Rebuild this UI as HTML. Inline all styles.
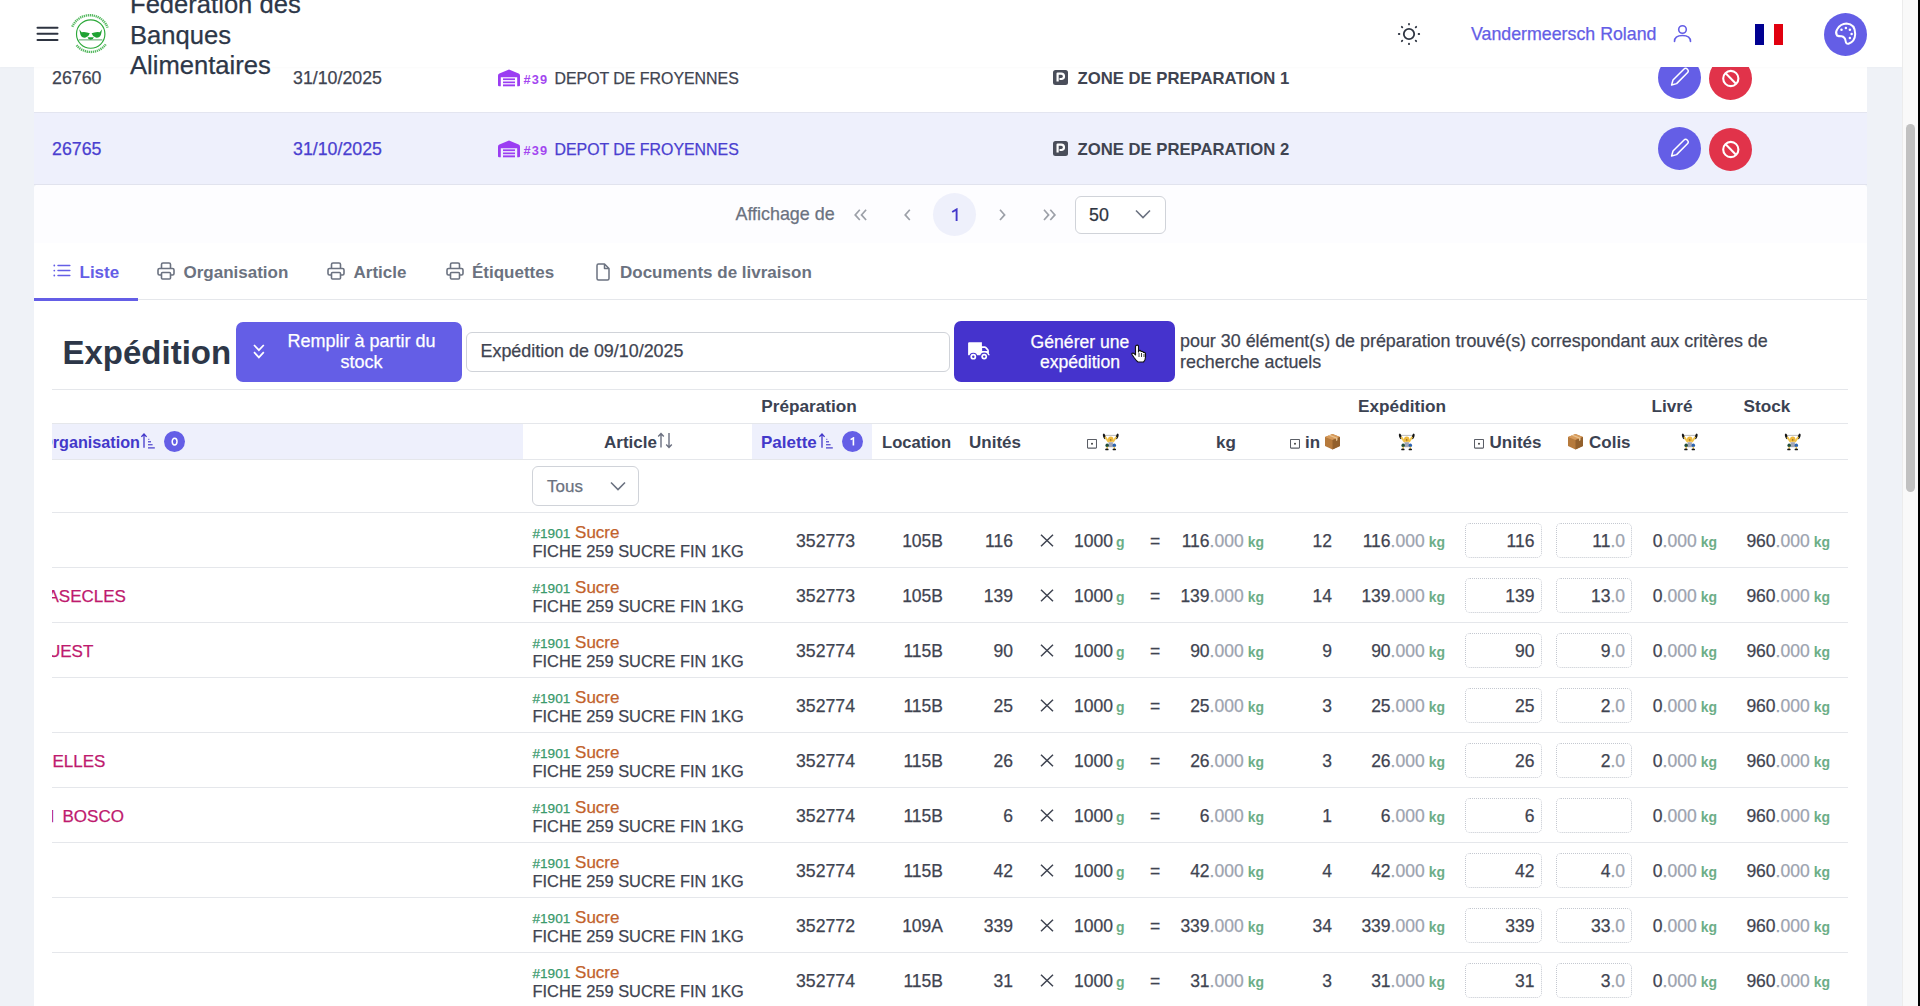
<!DOCTYPE html>
<html><head><meta charset="utf-8"><title>Expédition</title>
<style>
html,body{margin:0;padding:0;}
body{width:1920px;height:1006px;overflow:hidden;position:relative;background:#eff2f7;font-family:"Liberation Sans", sans-serif;}
.t{position:absolute;white-space:nowrap;font-family:"Liberation Sans", sans-serif;}
.r{-webkit-text-stroke:0.25px currentColor;}
.r b{-webkit-text-stroke:0;}
svg{display:block}
</style></head><body>

<div style="position:absolute;left:34px;top:0px;width:1833px;height:184px;background:#ffffff;"></div>
<div style="position:absolute;left:34px;top:113px;width:1833px;height:71px;background:#eef0fc;"></div>
<div style="position:absolute;left:34px;top:112px;width:1833px;height:1px;background:#e3e5f0;"></div>
<div style="position:absolute;left:34px;top:184px;width:1833px;height:1px;background:#e1e3ee;"></div>
<div class="t r" style="left:52px;top:67.83px;font-size:17.8px;line-height:20px;font-weight:400;color:#3f4451;">26760</div>
<div class="t r" style="left:293px;top:67.83px;font-size:17.8px;line-height:20px;font-weight:400;color:#3f4451;">31/10/2025</div>
<svg style="position:absolute;left:498px;top:69px;" width="22" height="18" viewBox="0 0 22 18" fill="none"><path d="M11 0.6 L20.6 4.6 Q22 5.2 22 6.8 V16.2 Q22 17.3 20.9 17.3 H19.2 V8.3 H2.8 V17.3 H1.1 Q0 17.3 0 16.2 V6.8 Q0 5.2 1.4 4.6 Z" fill="#9b3df2"/><rect x="5" y="9.4" width="12" height="1.7" fill="#9b3df2"/><rect x="5" y="12.5" width="12" height="1.7" fill="#9b3df2"/><rect x="5" y="15.4" width="12" height="1.9" fill="#9b3df2"/></svg>
<div class="t" style="left:523.5px;top:72.36px;font-size:12.8px;line-height:15px;font-weight:700;color:#a346f0;letter-spacing:1.1px;">#39</div>
<div class="t r" style="left:554.5px;top:70.49px;font-size:15.9px;line-height:18px;font-weight:400;color:#3f4451;">DEPOT DE FROYENNES</div>
<svg style="position:absolute;left:1053px;top:70px;" width="15" height="15" viewBox="0 0 15 15" fill="none"><rect x="0" y="0" width="15" height="15" rx="2.5" fill="#4a4e5a"/><path d="M4.6 11.6 V3.6 H8.2 Q11 3.6 11 6.3 Q11 9 8.2 9 H6.5" stroke="#fff" stroke-width="2.2" fill="none" stroke-linejoin="round"/></svg>
<div class="t" style="left:1077.5px;top:68.71px;font-size:16.7px;line-height:19px;font-weight:700;color:#3f4451;">ZONE DE PREPARATION 1</div>
<svg style="position:absolute;left:1657.5px;top:56.2px;" width="43" height="43" viewBox="0 0 43 43" fill="none"><circle cx="21.5" cy="21.5" r="21.5" fill="#645ee6"/><path d="M25.8 13.2 Q27.6 11.4 29.4 13.2 Q31.2 15 29.4 16.8 L18.6 27.6 L13.6 29 L15 24 Z" stroke="#fff" stroke-width="1.5" fill="none" stroke-linejoin="round"/></svg>
<svg style="position:absolute;left:1708.5px;top:56.7px;" width="43" height="43" viewBox="0 0 43 43" fill="none"><circle cx="21.5" cy="21.5" r="21.5" fill="#e1334a"/><circle cx="21.8" cy="21.5" r="7.6" stroke="#fff" stroke-width="2.1"/><path d="M16.4 16.1 L27.2 26.9" stroke="#fff" stroke-width="2.1"/></svg>
<div class="t r" style="left:52px;top:138.83px;font-size:17.8px;line-height:20px;font-weight:400;color:#4a3fd0;">26765</div>
<div class="t r" style="left:293px;top:138.83px;font-size:17.8px;line-height:20px;font-weight:400;color:#4a3fd0;">31/10/2025</div>
<svg style="position:absolute;left:498px;top:140px;" width="22" height="18" viewBox="0 0 22 18" fill="none"><path d="M11 0.6 L20.6 4.6 Q22 5.2 22 6.8 V16.2 Q22 17.3 20.9 17.3 H19.2 V8.3 H2.8 V17.3 H1.1 Q0 17.3 0 16.2 V6.8 Q0 5.2 1.4 4.6 Z" fill="#9b3df2"/><rect x="5" y="9.4" width="12" height="1.7" fill="#9b3df2"/><rect x="5" y="12.5" width="12" height="1.7" fill="#9b3df2"/><rect x="5" y="15.4" width="12" height="1.9" fill="#9b3df2"/></svg>
<div class="t" style="left:523.5px;top:143.36px;font-size:12.8px;line-height:15px;font-weight:700;color:#a346f0;letter-spacing:1.1px;">#39</div>
<div class="t r" style="left:554.5px;top:141.49px;font-size:15.9px;line-height:18px;font-weight:400;color:#4a3fd0;">DEPOT DE FROYENNES</div>
<svg style="position:absolute;left:1053px;top:141px;" width="15" height="15" viewBox="0 0 15 15" fill="none"><rect x="0" y="0" width="15" height="15" rx="2.5" fill="#4a4e5a"/><path d="M4.6 11.6 V3.6 H8.2 Q11 3.6 11 6.3 Q11 9 8.2 9 H6.5" stroke="#fff" stroke-width="2.2" fill="none" stroke-linejoin="round"/></svg>
<div class="t" style="left:1077.5px;top:139.71px;font-size:16.7px;line-height:19px;font-weight:700;color:#3f4451;">ZONE DE PREPARATION 2</div>
<svg style="position:absolute;left:1657.5px;top:127.2px;" width="43" height="43" viewBox="0 0 43 43" fill="none"><circle cx="21.5" cy="21.5" r="21.5" fill="#645ee6"/><path d="M25.8 13.2 Q27.6 11.4 29.4 13.2 Q31.2 15 29.4 16.8 L18.6 27.6 L13.6 29 L15 24 Z" stroke="#fff" stroke-width="1.5" fill="none" stroke-linejoin="round"/></svg>
<svg style="position:absolute;left:1708.5px;top:127.7px;" width="43" height="43" viewBox="0 0 43 43" fill="none"><circle cx="21.5" cy="21.5" r="21.5" fill="#e1334a"/><circle cx="21.8" cy="21.5" r="7.6" stroke="#fff" stroke-width="2.1"/><path d="M16.4 16.1 L27.2 26.9" stroke="#fff" stroke-width="2.1"/></svg>
<div style="position:absolute;left:34px;top:185px;width:1833px;height:830px;background:#ffffff;border-radius:4px 4px 0 0;"></div>
<div style="position:absolute;left:34px;top:185px;width:1833px;height:58px;background:#fdfdff;border-radius:4px 4px 0 0;"></div>
<div class="t r" style="left:735.5px;top:204.30px;font-size:17.9px;line-height:21px;font-weight:400;color:#6b7280;">Affichage de</div>
<svg style="position:absolute;left:854px;top:208.5px;" width="14" height="12" viewBox="0 0 14 12" fill="none"><path d="M5.8 0.8 L1.2 5.9 L5.8 11" stroke="#9ca0a8" stroke-width="1.7" fill="none"/><path d="M12.1 0.8 L7.5 5.9 L12.1 11" stroke="#9ca0a8" stroke-width="1.7" fill="none"/></svg>
<svg style="position:absolute;left:904px;top:208.5px;" width="14" height="12" viewBox="0 0 14 12" fill="none"><path d="M5.8 0.8 L1.2 5.9 L5.8 11" stroke="#9ca0a8" stroke-width="1.7" fill="none"/></svg>
<div style="position:absolute;left:933px;top:193px;width:43px;height:43px;background:#eef0fb;border-radius:50%;"></div>
<svg style="position:absolute;left:950px;top:208px;" width="10" height="14" viewBox="0 0 10 14" fill="none"><path d="M2.2 4 L6.6 1.4 V13" stroke="#4338ca" stroke-width="1.9" fill="none" stroke-linejoin="miter"/></svg>
<svg style="position:absolute;left:998.5px;top:208.5px;" width="14" height="12" viewBox="0 0 14 12" fill="none"><path d="M1 0.8 L5.6 5.9 L1 11" stroke="#9ca0a8" stroke-width="1.7" fill="none"/></svg>
<svg style="position:absolute;left:1043px;top:208.5px;" width="14" height="12" viewBox="0 0 14 12" fill="none"><path d="M1 0.8 L5.6 5.9 L1 11" stroke="#9ca0a8" stroke-width="1.7" fill="none"/><path d="M7.3 0.8 L11.9 5.9 L7.3 11" stroke="#9ca0a8" stroke-width="1.7" fill="none"/></svg>
<div style="position:absolute;left:1075px;top:196px;width:91px;height:38px;box-sizing:border-box;border:1px solid #d0d3d9;border-radius:6px;background:#fff;"></div>
<div class="t r" style="left:1089px;top:204.83px;font-size:17.8px;line-height:20px;font-weight:400;color:#2f3542;">50</div>
<svg style="position:absolute;left:1135px;top:209px;" width="16" height="10" viewBox="0 0 16 10" fill="none"><path d="M1 1.5 L8 8.5 L15 1.5" stroke="#6b7280" stroke-width="1.6" fill="none"/></svg>
<div style="position:absolute;left:34px;top:299px;width:1833px;height:1px;background:#e5e7eb;"></div>
<div style="position:absolute;left:34px;top:298px;width:104px;height:2.5px;background:#645ee6;"></div>
<svg style="position:absolute;left:53px;top:264px;" width="18" height="14" viewBox="0 0 18 14" fill="none"><g stroke="#645ee6" stroke-width="1.5" stroke-linecap="round"><path d="M5 1.5 H16.8"/><path d="M5 6.6 H16.8"/><path d="M5 11.5 H16.8"/></g><g fill="#645ee6"><circle cx="1.3" cy="1.5" r="0.9"/><circle cx="1.3" cy="6.6" r="0.9"/><circle cx="1.3" cy="11.5" r="0.9"/></g></svg>
<div class="t" style="left:79.5px;top:262.61px;font-size:17px;line-height:20px;font-weight:700;color:#645ee6;">Liste</div>
<svg style="position:absolute;left:157px;top:261.5px;" width="18" height="18" viewBox="0 0 18 18" fill="none"><g stroke="#6b7280" stroke-width="1.6" fill="none" stroke-linejoin="round"><path d="M4.5 6.5 V2.5 Q4.5 1 6 1 H12 Q13.5 1 13.5 2.5 V6.5"/><path d="M4.5 13 H2.5 Q1 13 1 11.5 V8 Q1 6.5 2.5 6.5 H15.5 Q17 6.5 17 8 V11.5 Q17 13 15.5 13 H13.5"/><rect x="4.5" y="10.5" width="9" height="6.5" rx="1"/></g></svg>
<div class="t" style="left:183.5px;top:262.61px;font-size:17px;line-height:20px;font-weight:700;color:#6b7280;">Organisation</div>
<svg style="position:absolute;left:327px;top:261.5px;" width="18" height="18" viewBox="0 0 18 18" fill="none"><g stroke="#6b7280" stroke-width="1.6" fill="none" stroke-linejoin="round"><path d="M4.5 6.5 V2.5 Q4.5 1 6 1 H12 Q13.5 1 13.5 2.5 V6.5"/><path d="M4.5 13 H2.5 Q1 13 1 11.5 V8 Q1 6.5 2.5 6.5 H15.5 Q17 6.5 17 8 V11.5 Q17 13 15.5 13 H13.5"/><rect x="4.5" y="10.5" width="9" height="6.5" rx="1"/></g></svg>
<div class="t" style="left:353.5px;top:262.61px;font-size:17px;line-height:20px;font-weight:700;color:#6b7280;">Article</div>
<svg style="position:absolute;left:446px;top:261.5px;" width="18" height="18" viewBox="0 0 18 18" fill="none"><g stroke="#6b7280" stroke-width="1.6" fill="none" stroke-linejoin="round"><path d="M4.5 6.5 V2.5 Q4.5 1 6 1 H12 Q13.5 1 13.5 2.5 V6.5"/><path d="M4.5 13 H2.5 Q1 13 1 11.5 V8 Q1 6.5 2.5 6.5 H15.5 Q17 6.5 17 8 V11.5 Q17 13 15.5 13 H13.5"/><rect x="4.5" y="10.5" width="9" height="6.5" rx="1"/></g></svg>
<div class="t" style="left:472px;top:262.61px;font-size:17px;line-height:20px;font-weight:700;color:#6b7280;">Étiquettes</div>
<svg style="position:absolute;left:596px;top:263px;" width="14" height="18" viewBox="0 0 14 18" fill="none"><path d="M1 2.5 Q1 1 2.5 1 H8.5 L13 5.5 V15.5 Q13 17 11.5 17 H2.5 Q1 17 1 15.5 Z M8.5 1 V5.5 H13" stroke="#6b7280" stroke-width="1.5" fill="none" stroke-linejoin="round"/></svg>
<div class="t" style="left:620px;top:262.61px;font-size:17px;line-height:20px;font-weight:700;color:#6b7280;">Documents de livraison</div>
<div class="t" style="left:62.5px;top:334.07px;font-size:33px;line-height:38px;font-weight:700;color:#2d3748;">Expédition</div>
<div style="position:absolute;left:236px;top:321.5px;width:226px;height:60.5px;background:#645ee6;border-radius:7px;"></div>
<svg style="position:absolute;left:252px;top:342px;" width="14" height="17" viewBox="0 0 14 17" fill="none"><g stroke="#fff" stroke-width="1.7" fill="none" stroke-linecap="butt" stroke-linejoin="miter"><path d="M2 3 L6.9 8.2 L11.8 3"/><path d="M2 10.2 L6.9 15.4 L11.8 10.2"/></g></svg>
<div class="t r" style="left:-138.5px;width:1000px;text-align:center;top:331.26px;font-size:18px;line-height:21px;font-weight:400;color:#ffffff;">Remplir à partir du</div>
<div class="t r" style="left:-138.5px;width:1000px;text-align:center;top:351.76px;font-size:18px;line-height:21px;font-weight:400;color:#ffffff;">stock</div>
<div style="position:absolute;left:466px;top:332px;width:484px;height:40px;box-sizing:border-box;border:1px solid #d0d3d9;border-radius:6px;background:#fff;"></div>
<div class="t r" style="left:480.5px;top:341.30px;font-size:17.9px;line-height:21px;font-weight:400;color:#3f4451;">Expédition de 09/10/2025</div>
<div style="position:absolute;left:954px;top:321.3px;width:221px;height:60.5px;background:#4533cd;border-radius:7px;"></div>
<svg style="position:absolute;left:967px;top:342px;" width="24" height="19" viewBox="0 0 24 19" fill="none"><path d="M1.1 1.3 Q1.1 0.3 2.1 0.3 H14.9 V4.2 H17.6 Q18.6 4.2 19.4 5 L21.4 7.3 Q21.9 7.9 21.9 8.8 V12 L22.7 12.5 V13.2 H1.1 Z" fill="#fff"/><path d="M15.1 6 H18 L20.6 8.9 H15.1 Z" fill="#4634cf"/><circle cx="6.3" cy="14.7" r="4" fill="#4634cf"/><circle cx="17.2" cy="14.6" r="4" fill="#4634cf"/><circle cx="6.3" cy="14.7" r="2.9" fill="#fff"/><circle cx="17.2" cy="14.6" r="2.9" fill="#fff"/><circle cx="6.3" cy="14.7" r="1.2" fill="#4634cf"/><circle cx="17.2" cy="14.6" r="1.2" fill="#4634cf"/></svg>
<div class="t r" style="left:580.0px;width:1000px;text-align:center;top:331.90px;font-size:17.6px;line-height:20px;font-weight:400;color:#ffffff;">Générer une</div>
<div class="t r" style="left:580.0px;width:1000px;text-align:center;top:352.40px;font-size:17.6px;line-height:20px;font-weight:400;color:#ffffff;">expédition</div>
<div class="t r" style="left:1180px;top:331.30px;font-size:17.9px;line-height:21px;font-weight:400;color:#3f4451;">pour 30 élément(s) de préparation trouvé(s) correspondant aux critères de</div>
<div class="t r" style="left:1180px;top:351.80px;font-size:17.9px;line-height:21px;font-weight:400;color:#3f4451;">recherche actuels</div>
<svg style="position:absolute;left:1131px;top:344px;" width="16" height="19" viewBox="0 0 16 19" fill="none"><path d="M5 1.5 Q6.5 0.5 7.5 1.8 V8 L8 6.5 Q9.5 6 10 7.2 L10.5 7.5 Q12 7 12.5 8.5 Q14 8 14.5 9.5 V13 Q14.5 16 12.5 18 H7 Q5.5 17 3 13.5 L1 10.5 Q0.5 9 2 9 Q3.5 9.5 4.5 11 V2.5 Z" fill="#fff" stroke="#111" stroke-width="1.1" stroke-linejoin="round"/><path d="M8 9 V13 M10.5 9 V13 M13 10 V13" stroke="#111" stroke-width="0.8"/></svg>
<div style="position:absolute;left:52px;top:389px;width:1796px;height:1px;background:#e5e7eb;"></div>
<div style="position:absolute;left:52px;top:423px;width:1796px;height:1px;background:#e5e7eb;"></div>
<div style="position:absolute;left:52px;top:424px;width:471px;height:35px;background:#eef0fc;"></div>
<div style="position:absolute;left:752px;top:424px;width:120px;height:35px;background:#eef0fc;"></div>
<div style="position:absolute;left:52px;top:459px;width:1796px;height:1px;background:#e5e7eb;"></div>
<div style="position:absolute;left:52px;top:512px;width:1796px;height:1px;background:#e5e7eb;"></div>
<div class="t" style="left:309.0px;width:1000px;text-align:center;top:396.04px;font-size:17.2px;line-height:20px;font-weight:700;color:#3b4252;">Préparation</div>
<div class="t" style="left:902.0px;width:1000px;text-align:center;top:396.04px;font-size:17.2px;line-height:20px;font-weight:700;color:#3b4252;">Expédition</div>
<div class="t" style="left:1172.0px;width:1000px;text-align:center;top:396.04px;font-size:17.2px;line-height:20px;font-weight:700;color:#3b4252;">Livré</div>
<div class="t" style="left:1267.0px;width:1000px;text-align:center;top:396.04px;font-size:17.2px;line-height:20px;font-weight:700;color:#3b4252;">Stock</div>
<svg style="position:absolute;left:141px;top:432px;" width="15" height="17" viewBox="0 0 15 17" fill="none"><g stroke="#4338ca" stroke-width="1.3" fill="none" stroke-linecap="butt" stroke-linejoin="miter"><path d="M3 15.7 V2.2 M0.4 4.9 L3 2 L5.6 4.9"/></g><g fill="#4338ca"><rect x="7" y="9.2" width="3" height="1.2"/><rect x="7.3" y="6.8" width="1" height="1"/><rect x="7" y="12.2" width="4.6" height="1.1"/><rect x="7" y="15.3" width="6.8" height="1.2"/></g></svg>
<div style="position:absolute;left:164px;top:431px;width:21px;height:21px;background:#645ee6;border-radius:50%;"></div>
<svg style="position:absolute;left:171px;top:436.5px;" width="8" height="10" viewBox="0 0 8 10" fill="none"><ellipse cx="3.6" cy="4.6" rx="2.4" ry="3.4" stroke="#fff" stroke-width="1.5" fill="none"/></svg>
<div class="t" style="left:604px;top:432.61px;font-size:17px;line-height:20px;font-weight:700;color:#3b4252;">Article</div>
<svg style="position:absolute;left:657px;top:432px;" width="16" height="17" viewBox="0 0 16 17" fill="none"><g stroke="#6b7080" stroke-width="1.4" fill="none" stroke-linecap="butt" stroke-linejoin="miter"><path d="M4 15.5 V1.8 M1.2 4.6 L4 1.6 L6.8 4.6"/><path d="M12 1 V15.2 M9.2 12.4 L12 15.4 L14.8 12.4"/></g></svg>
<div class="t" style="left:761px;top:432.61px;font-size:17px;line-height:20px;font-weight:700;color:#4338ca;">Palette</div>
<svg style="position:absolute;left:819px;top:432px;" width="15" height="17" viewBox="0 0 15 17" fill="none"><g stroke="#4338ca" stroke-width="1.3" fill="none" stroke-linecap="butt" stroke-linejoin="miter"><path d="M3 15.7 V2.2 M0.4 4.9 L3 2 L5.6 4.9"/></g><g fill="#4338ca"><rect x="7" y="9.2" width="3" height="1.2"/><rect x="7.3" y="6.8" width="1" height="1"/><rect x="7" y="12.2" width="4.6" height="1.1"/><rect x="7" y="15.3" width="6.8" height="1.2"/></g></svg>
<div style="position:absolute;left:842px;top:431px;width:21px;height:21px;background:#645ee6;border-radius:50%;"></div>
<svg style="position:absolute;left:849px;top:436.5px;" width="8" height="10" viewBox="0 0 8 10" fill="none"><path d="M1.6 2.6 L4.4 1 V8.6" stroke="#fff" stroke-width="1.6" fill="none"/></svg>
<div class="t" style="left:882px;top:433.25px;font-size:16.6px;line-height:19px;font-weight:700;color:#3b4252;">Location</div>
<div class="t" style="left:969px;top:432.61px;font-size:17px;line-height:20px;font-weight:700;color:#3b4252;">Unités</div>
<svg style="position:absolute;left:1087px;top:439px;" width="10" height="10" viewBox="0 0 10 10" fill="none"><rect x="0.5" y="0.5" width="9" height="8.6" rx="0.6" stroke="#5b5e66" stroke-width="1.05" fill="#fff"/><circle cx="5" cy="4.8" r="0.95" fill="#333"/></svg>
<svg style="position:absolute;left:1102px;top:433px;" width="18" height="18" viewBox="0 0 18 18" fill="none"><path d="M3 2.4 H15" stroke="#b5b5b5" stroke-width="0.9"/><ellipse cx="2.3" cy="3.4" rx="1.2" ry="2.9" transform="rotate(-18 2.3 3.4)" fill="#151515"/><ellipse cx="15.2" cy="3.4" rx="1.2" ry="2.9" transform="rotate(18 15.2 3.4)" fill="#151515"/><path d="M3.6 4.5 L6.3 8.6 M13.9 4.5 L11.2 8.6" stroke="#f1c54c" stroke-width="1.9" stroke-linecap="round"/><circle cx="8.75" cy="6.3" r="2.7" fill="#eeb83a"/><circle cx="8.75" cy="6.9" r="0.7" fill="#6b4a1a"/><rect x="6.6" y="9.2" width="4.3" height="5" fill="#a3a6b3"/><circle cx="5.2" cy="12.4" r="1.8" fill="#1e4d3b"/><circle cx="12.3" cy="12.4" r="1.8" fill="#2b63b0"/><path d="M5.2 13.8 V15.8 M12.3 13.8 V15.8" stroke="#f1c54c" stroke-width="1.4"/><ellipse cx="4.9" cy="16.4" rx="1.8" ry="0.95" fill="#151515"/><ellipse cx="12.3" cy="16.4" rx="1.8" ry="0.95" fill="#151515"/></svg>
<div class="t" style="left:1216px;top:432.61px;font-size:17px;line-height:20px;font-weight:700;color:#3b4252;">kg</div>
<svg style="position:absolute;left:1290px;top:439px;" width="10" height="10" viewBox="0 0 10 10" fill="none"><rect x="0.5" y="0.5" width="9" height="8.6" rx="0.6" stroke="#5b5e66" stroke-width="1.05" fill="#fff"/><circle cx="5" cy="4.8" r="0.95" fill="#333"/></svg>
<div class="t" style="left:1305px;top:432.61px;font-size:17px;line-height:20px;font-weight:700;color:#3b4252;">in</div>
<svg style="position:absolute;left:1324px;top:433px;" width="17" height="17" viewBox="0 0 17 17" fill="none"><path d="M8.5 1 L16 4 V13 L8.5 16.5 L1 13 V4 Z" fill="#b67a3c"/><path d="M1 4 L8.5 7 L16 4 L8.5 1 Z" fill="#d79a5a"/><path d="M8.5 7 V16.5 L16 13 V4 Z" fill="#93602c"/><path d="M4.5 2.5 L12 5.5 V8 L13.5 7.3 V4.8 L6 1.8 Z" fill="#e8c28f"/></svg>
<svg style="position:absolute;left:1398px;top:433px;" width="18" height="18" viewBox="0 0 18 18" fill="none"><path d="M3 2.4 H15" stroke="#b5b5b5" stroke-width="0.9"/><ellipse cx="2.3" cy="3.4" rx="1.2" ry="2.9" transform="rotate(-18 2.3 3.4)" fill="#151515"/><ellipse cx="15.2" cy="3.4" rx="1.2" ry="2.9" transform="rotate(18 15.2 3.4)" fill="#151515"/><path d="M3.6 4.5 L6.3 8.6 M13.9 4.5 L11.2 8.6" stroke="#f1c54c" stroke-width="1.9" stroke-linecap="round"/><circle cx="8.75" cy="6.3" r="2.7" fill="#eeb83a"/><circle cx="8.75" cy="6.9" r="0.7" fill="#6b4a1a"/><rect x="6.6" y="9.2" width="4.3" height="5" fill="#a3a6b3"/><circle cx="5.2" cy="12.4" r="1.8" fill="#1e4d3b"/><circle cx="12.3" cy="12.4" r="1.8" fill="#2b63b0"/><path d="M5.2 13.8 V15.8 M12.3 13.8 V15.8" stroke="#f1c54c" stroke-width="1.4"/><ellipse cx="4.9" cy="16.4" rx="1.8" ry="0.95" fill="#151515"/><ellipse cx="12.3" cy="16.4" rx="1.8" ry="0.95" fill="#151515"/></svg>
<svg style="position:absolute;left:1474px;top:439px;" width="10" height="10" viewBox="0 0 10 10" fill="none"><rect x="0.5" y="0.5" width="9" height="8.6" rx="0.6" stroke="#5b5e66" stroke-width="1.05" fill="#fff"/><circle cx="5" cy="4.8" r="0.95" fill="#333"/></svg>
<div class="t" style="left:1489.5px;top:432.61px;font-size:17px;line-height:20px;font-weight:700;color:#3b4252;">Unités</div>
<svg style="position:absolute;left:1567px;top:433px;" width="17" height="17" viewBox="0 0 17 17" fill="none"><path d="M8.5 1 L16 4 V13 L8.5 16.5 L1 13 V4 Z" fill="#b67a3c"/><path d="M1 4 L8.5 7 L16 4 L8.5 1 Z" fill="#d79a5a"/><path d="M8.5 7 V16.5 L16 13 V4 Z" fill="#93602c"/><path d="M4.5 2.5 L12 5.5 V8 L13.5 7.3 V4.8 L6 1.8 Z" fill="#e8c28f"/></svg>
<div class="t" style="left:1589px;top:432.61px;font-size:17px;line-height:20px;font-weight:700;color:#3b4252;">Colis</div>
<svg style="position:absolute;left:1681px;top:433px;" width="18" height="18" viewBox="0 0 18 18" fill="none"><path d="M3 2.4 H15" stroke="#b5b5b5" stroke-width="0.9"/><ellipse cx="2.3" cy="3.4" rx="1.2" ry="2.9" transform="rotate(-18 2.3 3.4)" fill="#151515"/><ellipse cx="15.2" cy="3.4" rx="1.2" ry="2.9" transform="rotate(18 15.2 3.4)" fill="#151515"/><path d="M3.6 4.5 L6.3 8.6 M13.9 4.5 L11.2 8.6" stroke="#f1c54c" stroke-width="1.9" stroke-linecap="round"/><circle cx="8.75" cy="6.3" r="2.7" fill="#eeb83a"/><circle cx="8.75" cy="6.9" r="0.7" fill="#6b4a1a"/><rect x="6.6" y="9.2" width="4.3" height="5" fill="#a3a6b3"/><circle cx="5.2" cy="12.4" r="1.8" fill="#1e4d3b"/><circle cx="12.3" cy="12.4" r="1.8" fill="#2b63b0"/><path d="M5.2 13.8 V15.8 M12.3 13.8 V15.8" stroke="#f1c54c" stroke-width="1.4"/><ellipse cx="4.9" cy="16.4" rx="1.8" ry="0.95" fill="#151515"/><ellipse cx="12.3" cy="16.4" rx="1.8" ry="0.95" fill="#151515"/></svg>
<svg style="position:absolute;left:1784px;top:433px;" width="18" height="18" viewBox="0 0 18 18" fill="none"><path d="M3 2.4 H15" stroke="#b5b5b5" stroke-width="0.9"/><ellipse cx="2.3" cy="3.4" rx="1.2" ry="2.9" transform="rotate(-18 2.3 3.4)" fill="#151515"/><ellipse cx="15.2" cy="3.4" rx="1.2" ry="2.9" transform="rotate(18 15.2 3.4)" fill="#151515"/><path d="M3.6 4.5 L6.3 8.6 M13.9 4.5 L11.2 8.6" stroke="#f1c54c" stroke-width="1.9" stroke-linecap="round"/><circle cx="8.75" cy="6.3" r="2.7" fill="#eeb83a"/><circle cx="8.75" cy="6.9" r="0.7" fill="#6b4a1a"/><rect x="6.6" y="9.2" width="4.3" height="5" fill="#a3a6b3"/><circle cx="5.2" cy="12.4" r="1.8" fill="#1e4d3b"/><circle cx="12.3" cy="12.4" r="1.8" fill="#2b63b0"/><path d="M5.2 13.8 V15.8 M12.3 13.8 V15.8" stroke="#f1c54c" stroke-width="1.4"/><ellipse cx="4.9" cy="16.4" rx="1.8" ry="0.95" fill="#151515"/><ellipse cx="12.3" cy="16.4" rx="1.8" ry="0.95" fill="#151515"/></svg>
<div style="position:absolute;left:532px;top:466px;width:107px;height:40px;box-sizing:border-box;border:1px solid #d0d3d9;border-radius:6px;background:#fff;"></div>
<div class="t r" style="left:547px;top:476.61px;font-size:17px;line-height:20px;font-weight:400;color:#6b7280;">Tous</div>
<svg style="position:absolute;left:610px;top:481px;" width="16" height="10" viewBox="0 0 16 10" fill="none"><path d="M1 1.5 L8 8.5 L15 1.5" stroke="#6b7280" stroke-width="1.6" fill="none"/></svg>
<div style="position:absolute;left:52px;top:567px;width:1796px;height:1px;background:#e5e7eb;"></div>
<div class="t r" style="left:532.5px;top:522.61px;font-size:17px;line-height:20px;font-weight:400;color:#374151;"><span style="color:#3a9a6c;font-size:13.6px">#1901</span> <span style="color:#c2622b">Sucre</span></div>
<div class="t r" style="left:532.5px;top:541.82px;font-size:16.4px;line-height:19px;font-weight:400;color:#3f4451;">FICHE 259 SUCRE FIN 1KG</div>
<div class="t r" style="left:-145px;width:1000px;text-align:right;top:530.87px;font-size:17.7px;line-height:20px;font-weight:400;color:#3f4451;">352773</div>
<div class="t r" style="left:-57px;width:1000px;text-align:right;top:530.94px;font-size:17.5px;line-height:20px;font-weight:400;color:#3f4451;">105B</div>
<div class="t r" style="left:13px;width:1000px;text-align:right;top:530.94px;font-size:17.5px;line-height:20px;font-weight:400;color:#3f4451;">116</div>
<svg style="position:absolute;left:1040px;top:534px;" width="14" height="13" viewBox="0 0 14 13" fill="none"><path d="M1 0.8 L13 12.2 M13 0.8 L1 12.2" stroke="#3f4451" stroke-width="1.5"/></svg>
<div class="t r" style="left:1074px;top:530.94px;font-size:17.5px;line-height:20px;font-weight:400;color:#3f4451;">1000<span style="color:#6cae87;font-size:14px;font-weight:700;-webkit-text-stroke:0;margin-left:3px">g</span></div>
<div class="t r" style="left:655.0px;width:1000px;text-align:center;top:530.94px;font-size:17.5px;line-height:20px;font-weight:400;color:#3f4451;">=</div>
<div class="t r" style="left:264px;width:1000px;text-align:right;top:530.94px;font-size:17.5px;line-height:20px;font-weight:400;color:#374151;"><span style="color:#3f4451">116</span><span style="color:#9ca3af">.000</span><span style="color:#6cae87;font-size:14px;font-weight:700;-webkit-text-stroke:0;margin-left:4px">kg</span></div>
<div class="t r" style="left:332px;width:1000px;text-align:right;top:530.94px;font-size:17.5px;line-height:20px;font-weight:400;color:#3f4451;">12</div>
<div class="t r" style="left:445px;width:1000px;text-align:right;top:530.94px;font-size:17.5px;line-height:20px;font-weight:400;color:#374151;"><span style="color:#3f4451">116</span><span style="color:#9ca3af">.000</span><span style="color:#6cae87;font-size:14px;font-weight:700;-webkit-text-stroke:0;margin-left:4px">kg</span></div>
<div style="position:absolute;left:1465px;top:523px;width:77px;height:35px;box-sizing:border-box;border:1px dotted #c4c8d0;border-radius:5px;background:#fff;"></div>
<div class="t r" style="left:534.5px;width:1000px;text-align:right;top:530.94px;font-size:17.5px;line-height:20px;font-weight:400;color:#3f4451;">116</div>
<div style="position:absolute;left:1556px;top:523px;width:76px;height:35px;box-sizing:border-box;border:1px dotted #c4c8d0;border-radius:5px;background:#fff;"></div>
<div class="t r" style="left:625px;width:1000px;text-align:right;top:530.94px;font-size:17.5px;line-height:20px;font-weight:400;color:#3f4451;">11<span style="color:#9ca3af">.0</span></div>
<div class="t r" style="left:717px;width:1000px;text-align:right;top:530.94px;font-size:17.5px;line-height:20px;font-weight:400;color:#374151;"><span style="color:#3f4451">0</span><span style="color:#9ca3af">.000</span><span style="color:#6cae87;font-size:14px;font-weight:700;-webkit-text-stroke:0;margin-left:4px">kg</span></div>
<div class="t r" style="left:830px;width:1000px;text-align:right;top:530.94px;font-size:17.5px;line-height:20px;font-weight:400;color:#374151;"><span style="color:#3f4451">960</span><span style="color:#9ca3af">.000</span><span style="color:#6cae87;font-size:14px;font-weight:700;-webkit-text-stroke:0;margin-left:4px">kg</span></div>
<div style="position:absolute;left:52px;top:622px;width:1796px;height:1px;background:#e5e7eb;"></div>
<div class="t r" style="left:532.5px;top:577.61px;font-size:17px;line-height:20px;font-weight:400;color:#374151;"><span style="color:#3a9a6c;font-size:13.6px">#1901</span> <span style="color:#c2622b">Sucre</span></div>
<div class="t r" style="left:532.5px;top:596.82px;font-size:16.4px;line-height:19px;font-weight:400;color:#3f4451;">FICHE 259 SUCRE FIN 1KG</div>
<div class="t r" style="left:-145px;width:1000px;text-align:right;top:585.87px;font-size:17.7px;line-height:20px;font-weight:400;color:#3f4451;">352773</div>
<div class="t r" style="left:-57px;width:1000px;text-align:right;top:585.94px;font-size:17.5px;line-height:20px;font-weight:400;color:#3f4451;">105B</div>
<div class="t r" style="left:13px;width:1000px;text-align:right;top:585.94px;font-size:17.5px;line-height:20px;font-weight:400;color:#3f4451;">139</div>
<svg style="position:absolute;left:1040px;top:589px;" width="14" height="13" viewBox="0 0 14 13" fill="none"><path d="M1 0.8 L13 12.2 M13 0.8 L1 12.2" stroke="#3f4451" stroke-width="1.5"/></svg>
<div class="t r" style="left:1074px;top:585.94px;font-size:17.5px;line-height:20px;font-weight:400;color:#3f4451;">1000<span style="color:#6cae87;font-size:14px;font-weight:700;-webkit-text-stroke:0;margin-left:3px">g</span></div>
<div class="t r" style="left:655.0px;width:1000px;text-align:center;top:585.94px;font-size:17.5px;line-height:20px;font-weight:400;color:#3f4451;">=</div>
<div class="t r" style="left:264px;width:1000px;text-align:right;top:585.94px;font-size:17.5px;line-height:20px;font-weight:400;color:#374151;"><span style="color:#3f4451">139</span><span style="color:#9ca3af">.000</span><span style="color:#6cae87;font-size:14px;font-weight:700;-webkit-text-stroke:0;margin-left:4px">kg</span></div>
<div class="t r" style="left:332px;width:1000px;text-align:right;top:585.94px;font-size:17.5px;line-height:20px;font-weight:400;color:#3f4451;">14</div>
<div class="t r" style="left:445px;width:1000px;text-align:right;top:585.94px;font-size:17.5px;line-height:20px;font-weight:400;color:#374151;"><span style="color:#3f4451">139</span><span style="color:#9ca3af">.000</span><span style="color:#6cae87;font-size:14px;font-weight:700;-webkit-text-stroke:0;margin-left:4px">kg</span></div>
<div style="position:absolute;left:1465px;top:578px;width:77px;height:35px;box-sizing:border-box;border:1px dotted #c4c8d0;border-radius:5px;background:#fff;"></div>
<div class="t r" style="left:534.5px;width:1000px;text-align:right;top:585.94px;font-size:17.5px;line-height:20px;font-weight:400;color:#3f4451;">139</div>
<div style="position:absolute;left:1556px;top:578px;width:76px;height:35px;box-sizing:border-box;border:1px dotted #c4c8d0;border-radius:5px;background:#fff;"></div>
<div class="t r" style="left:625px;width:1000px;text-align:right;top:585.94px;font-size:17.5px;line-height:20px;font-weight:400;color:#3f4451;">13<span style="color:#9ca3af">.0</span></div>
<div class="t r" style="left:717px;width:1000px;text-align:right;top:585.94px;font-size:17.5px;line-height:20px;font-weight:400;color:#374151;"><span style="color:#3f4451">0</span><span style="color:#9ca3af">.000</span><span style="color:#6cae87;font-size:14px;font-weight:700;-webkit-text-stroke:0;margin-left:4px">kg</span></div>
<div class="t r" style="left:830px;width:1000px;text-align:right;top:585.94px;font-size:17.5px;line-height:20px;font-weight:400;color:#374151;"><span style="color:#3f4451">960</span><span style="color:#9ca3af">.000</span><span style="color:#6cae87;font-size:14px;font-weight:700;-webkit-text-stroke:0;margin-left:4px">kg</span></div>
<div style="position:absolute;left:52px;top:677px;width:1796px;height:1px;background:#e5e7eb;"></div>
<div class="t r" style="left:532.5px;top:632.61px;font-size:17px;line-height:20px;font-weight:400;color:#374151;"><span style="color:#3a9a6c;font-size:13.6px">#1901</span> <span style="color:#c2622b">Sucre</span></div>
<div class="t r" style="left:532.5px;top:651.82px;font-size:16.4px;line-height:19px;font-weight:400;color:#3f4451;">FICHE 259 SUCRE FIN 1KG</div>
<div class="t r" style="left:-145px;width:1000px;text-align:right;top:640.87px;font-size:17.7px;line-height:20px;font-weight:400;color:#3f4451;">352774</div>
<div class="t r" style="left:-57px;width:1000px;text-align:right;top:640.94px;font-size:17.5px;line-height:20px;font-weight:400;color:#3f4451;">115B</div>
<div class="t r" style="left:13px;width:1000px;text-align:right;top:640.94px;font-size:17.5px;line-height:20px;font-weight:400;color:#3f4451;">90</div>
<svg style="position:absolute;left:1040px;top:644px;" width="14" height="13" viewBox="0 0 14 13" fill="none"><path d="M1 0.8 L13 12.2 M13 0.8 L1 12.2" stroke="#3f4451" stroke-width="1.5"/></svg>
<div class="t r" style="left:1074px;top:640.94px;font-size:17.5px;line-height:20px;font-weight:400;color:#3f4451;">1000<span style="color:#6cae87;font-size:14px;font-weight:700;-webkit-text-stroke:0;margin-left:3px">g</span></div>
<div class="t r" style="left:655.0px;width:1000px;text-align:center;top:640.94px;font-size:17.5px;line-height:20px;font-weight:400;color:#3f4451;">=</div>
<div class="t r" style="left:264px;width:1000px;text-align:right;top:640.94px;font-size:17.5px;line-height:20px;font-weight:400;color:#374151;"><span style="color:#3f4451">90</span><span style="color:#9ca3af">.000</span><span style="color:#6cae87;font-size:14px;font-weight:700;-webkit-text-stroke:0;margin-left:4px">kg</span></div>
<div class="t r" style="left:332px;width:1000px;text-align:right;top:640.94px;font-size:17.5px;line-height:20px;font-weight:400;color:#3f4451;">9</div>
<div class="t r" style="left:445px;width:1000px;text-align:right;top:640.94px;font-size:17.5px;line-height:20px;font-weight:400;color:#374151;"><span style="color:#3f4451">90</span><span style="color:#9ca3af">.000</span><span style="color:#6cae87;font-size:14px;font-weight:700;-webkit-text-stroke:0;margin-left:4px">kg</span></div>
<div style="position:absolute;left:1465px;top:633px;width:77px;height:35px;box-sizing:border-box;border:1px dotted #c4c8d0;border-radius:5px;background:#fff;"></div>
<div class="t r" style="left:534.5px;width:1000px;text-align:right;top:640.94px;font-size:17.5px;line-height:20px;font-weight:400;color:#3f4451;">90</div>
<div style="position:absolute;left:1556px;top:633px;width:76px;height:35px;box-sizing:border-box;border:1px dotted #c4c8d0;border-radius:5px;background:#fff;"></div>
<div class="t r" style="left:625px;width:1000px;text-align:right;top:640.94px;font-size:17.5px;line-height:20px;font-weight:400;color:#3f4451;">9<span style="color:#9ca3af">.0</span></div>
<div class="t r" style="left:717px;width:1000px;text-align:right;top:640.94px;font-size:17.5px;line-height:20px;font-weight:400;color:#374151;"><span style="color:#3f4451">0</span><span style="color:#9ca3af">.000</span><span style="color:#6cae87;font-size:14px;font-weight:700;-webkit-text-stroke:0;margin-left:4px">kg</span></div>
<div class="t r" style="left:830px;width:1000px;text-align:right;top:640.94px;font-size:17.5px;line-height:20px;font-weight:400;color:#374151;"><span style="color:#3f4451">960</span><span style="color:#9ca3af">.000</span><span style="color:#6cae87;font-size:14px;font-weight:700;-webkit-text-stroke:0;margin-left:4px">kg</span></div>
<div style="position:absolute;left:52px;top:732px;width:1796px;height:1px;background:#e5e7eb;"></div>
<div class="t r" style="left:532.5px;top:687.61px;font-size:17px;line-height:20px;font-weight:400;color:#374151;"><span style="color:#3a9a6c;font-size:13.6px">#1901</span> <span style="color:#c2622b">Sucre</span></div>
<div class="t r" style="left:532.5px;top:706.82px;font-size:16.4px;line-height:19px;font-weight:400;color:#3f4451;">FICHE 259 SUCRE FIN 1KG</div>
<div class="t r" style="left:-145px;width:1000px;text-align:right;top:695.87px;font-size:17.7px;line-height:20px;font-weight:400;color:#3f4451;">352774</div>
<div class="t r" style="left:-57px;width:1000px;text-align:right;top:695.94px;font-size:17.5px;line-height:20px;font-weight:400;color:#3f4451;">115B</div>
<div class="t r" style="left:13px;width:1000px;text-align:right;top:695.94px;font-size:17.5px;line-height:20px;font-weight:400;color:#3f4451;">25</div>
<svg style="position:absolute;left:1040px;top:699px;" width="14" height="13" viewBox="0 0 14 13" fill="none"><path d="M1 0.8 L13 12.2 M13 0.8 L1 12.2" stroke="#3f4451" stroke-width="1.5"/></svg>
<div class="t r" style="left:1074px;top:695.94px;font-size:17.5px;line-height:20px;font-weight:400;color:#3f4451;">1000<span style="color:#6cae87;font-size:14px;font-weight:700;-webkit-text-stroke:0;margin-left:3px">g</span></div>
<div class="t r" style="left:655.0px;width:1000px;text-align:center;top:695.94px;font-size:17.5px;line-height:20px;font-weight:400;color:#3f4451;">=</div>
<div class="t r" style="left:264px;width:1000px;text-align:right;top:695.94px;font-size:17.5px;line-height:20px;font-weight:400;color:#374151;"><span style="color:#3f4451">25</span><span style="color:#9ca3af">.000</span><span style="color:#6cae87;font-size:14px;font-weight:700;-webkit-text-stroke:0;margin-left:4px">kg</span></div>
<div class="t r" style="left:332px;width:1000px;text-align:right;top:695.94px;font-size:17.5px;line-height:20px;font-weight:400;color:#3f4451;">3</div>
<div class="t r" style="left:445px;width:1000px;text-align:right;top:695.94px;font-size:17.5px;line-height:20px;font-weight:400;color:#374151;"><span style="color:#3f4451">25</span><span style="color:#9ca3af">.000</span><span style="color:#6cae87;font-size:14px;font-weight:700;-webkit-text-stroke:0;margin-left:4px">kg</span></div>
<div style="position:absolute;left:1465px;top:688px;width:77px;height:35px;box-sizing:border-box;border:1px dotted #c4c8d0;border-radius:5px;background:#fff;"></div>
<div class="t r" style="left:534.5px;width:1000px;text-align:right;top:695.94px;font-size:17.5px;line-height:20px;font-weight:400;color:#3f4451;">25</div>
<div style="position:absolute;left:1556px;top:688px;width:76px;height:35px;box-sizing:border-box;border:1px dotted #c4c8d0;border-radius:5px;background:#fff;"></div>
<div class="t r" style="left:625px;width:1000px;text-align:right;top:695.94px;font-size:17.5px;line-height:20px;font-weight:400;color:#3f4451;">2<span style="color:#9ca3af">.0</span></div>
<div class="t r" style="left:717px;width:1000px;text-align:right;top:695.94px;font-size:17.5px;line-height:20px;font-weight:400;color:#374151;"><span style="color:#3f4451">0</span><span style="color:#9ca3af">.000</span><span style="color:#6cae87;font-size:14px;font-weight:700;-webkit-text-stroke:0;margin-left:4px">kg</span></div>
<div class="t r" style="left:830px;width:1000px;text-align:right;top:695.94px;font-size:17.5px;line-height:20px;font-weight:400;color:#374151;"><span style="color:#3f4451">960</span><span style="color:#9ca3af">.000</span><span style="color:#6cae87;font-size:14px;font-weight:700;-webkit-text-stroke:0;margin-left:4px">kg</span></div>
<div style="position:absolute;left:52px;top:787px;width:1796px;height:1px;background:#e5e7eb;"></div>
<div class="t r" style="left:532.5px;top:742.61px;font-size:17px;line-height:20px;font-weight:400;color:#374151;"><span style="color:#3a9a6c;font-size:13.6px">#1901</span> <span style="color:#c2622b">Sucre</span></div>
<div class="t r" style="left:532.5px;top:761.82px;font-size:16.4px;line-height:19px;font-weight:400;color:#3f4451;">FICHE 259 SUCRE FIN 1KG</div>
<div class="t r" style="left:-145px;width:1000px;text-align:right;top:750.87px;font-size:17.7px;line-height:20px;font-weight:400;color:#3f4451;">352774</div>
<div class="t r" style="left:-57px;width:1000px;text-align:right;top:750.94px;font-size:17.5px;line-height:20px;font-weight:400;color:#3f4451;">115B</div>
<div class="t r" style="left:13px;width:1000px;text-align:right;top:750.94px;font-size:17.5px;line-height:20px;font-weight:400;color:#3f4451;">26</div>
<svg style="position:absolute;left:1040px;top:754px;" width="14" height="13" viewBox="0 0 14 13" fill="none"><path d="M1 0.8 L13 12.2 M13 0.8 L1 12.2" stroke="#3f4451" stroke-width="1.5"/></svg>
<div class="t r" style="left:1074px;top:750.94px;font-size:17.5px;line-height:20px;font-weight:400;color:#3f4451;">1000<span style="color:#6cae87;font-size:14px;font-weight:700;-webkit-text-stroke:0;margin-left:3px">g</span></div>
<div class="t r" style="left:655.0px;width:1000px;text-align:center;top:750.94px;font-size:17.5px;line-height:20px;font-weight:400;color:#3f4451;">=</div>
<div class="t r" style="left:264px;width:1000px;text-align:right;top:750.94px;font-size:17.5px;line-height:20px;font-weight:400;color:#374151;"><span style="color:#3f4451">26</span><span style="color:#9ca3af">.000</span><span style="color:#6cae87;font-size:14px;font-weight:700;-webkit-text-stroke:0;margin-left:4px">kg</span></div>
<div class="t r" style="left:332px;width:1000px;text-align:right;top:750.94px;font-size:17.5px;line-height:20px;font-weight:400;color:#3f4451;">3</div>
<div class="t r" style="left:445px;width:1000px;text-align:right;top:750.94px;font-size:17.5px;line-height:20px;font-weight:400;color:#374151;"><span style="color:#3f4451">26</span><span style="color:#9ca3af">.000</span><span style="color:#6cae87;font-size:14px;font-weight:700;-webkit-text-stroke:0;margin-left:4px">kg</span></div>
<div style="position:absolute;left:1465px;top:743px;width:77px;height:35px;box-sizing:border-box;border:1px dotted #c4c8d0;border-radius:5px;background:#fff;"></div>
<div class="t r" style="left:534.5px;width:1000px;text-align:right;top:750.94px;font-size:17.5px;line-height:20px;font-weight:400;color:#3f4451;">26</div>
<div style="position:absolute;left:1556px;top:743px;width:76px;height:35px;box-sizing:border-box;border:1px dotted #c4c8d0;border-radius:5px;background:#fff;"></div>
<div class="t r" style="left:625px;width:1000px;text-align:right;top:750.94px;font-size:17.5px;line-height:20px;font-weight:400;color:#3f4451;">2<span style="color:#9ca3af">.0</span></div>
<div class="t r" style="left:717px;width:1000px;text-align:right;top:750.94px;font-size:17.5px;line-height:20px;font-weight:400;color:#374151;"><span style="color:#3f4451">0</span><span style="color:#9ca3af">.000</span><span style="color:#6cae87;font-size:14px;font-weight:700;-webkit-text-stroke:0;margin-left:4px">kg</span></div>
<div class="t r" style="left:830px;width:1000px;text-align:right;top:750.94px;font-size:17.5px;line-height:20px;font-weight:400;color:#374151;"><span style="color:#3f4451">960</span><span style="color:#9ca3af">.000</span><span style="color:#6cae87;font-size:14px;font-weight:700;-webkit-text-stroke:0;margin-left:4px">kg</span></div>
<div style="position:absolute;left:52px;top:842px;width:1796px;height:1px;background:#e5e7eb;"></div>
<div class="t r" style="left:532.5px;top:797.61px;font-size:17px;line-height:20px;font-weight:400;color:#374151;"><span style="color:#3a9a6c;font-size:13.6px">#1901</span> <span style="color:#c2622b">Sucre</span></div>
<div class="t r" style="left:532.5px;top:816.82px;font-size:16.4px;line-height:19px;font-weight:400;color:#3f4451;">FICHE 259 SUCRE FIN 1KG</div>
<div class="t r" style="left:-145px;width:1000px;text-align:right;top:805.87px;font-size:17.7px;line-height:20px;font-weight:400;color:#3f4451;">352774</div>
<div class="t r" style="left:-57px;width:1000px;text-align:right;top:805.94px;font-size:17.5px;line-height:20px;font-weight:400;color:#3f4451;">115B</div>
<div class="t r" style="left:13px;width:1000px;text-align:right;top:805.94px;font-size:17.5px;line-height:20px;font-weight:400;color:#3f4451;">6</div>
<svg style="position:absolute;left:1040px;top:809px;" width="14" height="13" viewBox="0 0 14 13" fill="none"><path d="M1 0.8 L13 12.2 M13 0.8 L1 12.2" stroke="#3f4451" stroke-width="1.5"/></svg>
<div class="t r" style="left:1074px;top:805.94px;font-size:17.5px;line-height:20px;font-weight:400;color:#3f4451;">1000<span style="color:#6cae87;font-size:14px;font-weight:700;-webkit-text-stroke:0;margin-left:3px">g</span></div>
<div class="t r" style="left:655.0px;width:1000px;text-align:center;top:805.94px;font-size:17.5px;line-height:20px;font-weight:400;color:#3f4451;">=</div>
<div class="t r" style="left:264px;width:1000px;text-align:right;top:805.94px;font-size:17.5px;line-height:20px;font-weight:400;color:#374151;"><span style="color:#3f4451">6</span><span style="color:#9ca3af">.000</span><span style="color:#6cae87;font-size:14px;font-weight:700;-webkit-text-stroke:0;margin-left:4px">kg</span></div>
<div class="t r" style="left:332px;width:1000px;text-align:right;top:805.94px;font-size:17.5px;line-height:20px;font-weight:400;color:#3f4451;">1</div>
<div class="t r" style="left:445px;width:1000px;text-align:right;top:805.94px;font-size:17.5px;line-height:20px;font-weight:400;color:#374151;"><span style="color:#3f4451">6</span><span style="color:#9ca3af">.000</span><span style="color:#6cae87;font-size:14px;font-weight:700;-webkit-text-stroke:0;margin-left:4px">kg</span></div>
<div style="position:absolute;left:1465px;top:798px;width:77px;height:35px;box-sizing:border-box;border:1px dotted #c4c8d0;border-radius:5px;background:#fff;"></div>
<div class="t r" style="left:534.5px;width:1000px;text-align:right;top:805.94px;font-size:17.5px;line-height:20px;font-weight:400;color:#3f4451;">6</div>
<div style="position:absolute;left:1556px;top:798px;width:76px;height:35px;box-sizing:border-box;border:1px dotted #c4c8d0;border-radius:5px;background:#fff;"></div>
<div class="t r" style="left:717px;width:1000px;text-align:right;top:805.94px;font-size:17.5px;line-height:20px;font-weight:400;color:#374151;"><span style="color:#3f4451">0</span><span style="color:#9ca3af">.000</span><span style="color:#6cae87;font-size:14px;font-weight:700;-webkit-text-stroke:0;margin-left:4px">kg</span></div>
<div class="t r" style="left:830px;width:1000px;text-align:right;top:805.94px;font-size:17.5px;line-height:20px;font-weight:400;color:#374151;"><span style="color:#3f4451">960</span><span style="color:#9ca3af">.000</span><span style="color:#6cae87;font-size:14px;font-weight:700;-webkit-text-stroke:0;margin-left:4px">kg</span></div>
<div style="position:absolute;left:52px;top:897px;width:1796px;height:1px;background:#e5e7eb;"></div>
<div class="t r" style="left:532.5px;top:852.61px;font-size:17px;line-height:20px;font-weight:400;color:#374151;"><span style="color:#3a9a6c;font-size:13.6px">#1901</span> <span style="color:#c2622b">Sucre</span></div>
<div class="t r" style="left:532.5px;top:871.82px;font-size:16.4px;line-height:19px;font-weight:400;color:#3f4451;">FICHE 259 SUCRE FIN 1KG</div>
<div class="t r" style="left:-145px;width:1000px;text-align:right;top:860.87px;font-size:17.7px;line-height:20px;font-weight:400;color:#3f4451;">352774</div>
<div class="t r" style="left:-57px;width:1000px;text-align:right;top:860.94px;font-size:17.5px;line-height:20px;font-weight:400;color:#3f4451;">115B</div>
<div class="t r" style="left:13px;width:1000px;text-align:right;top:860.94px;font-size:17.5px;line-height:20px;font-weight:400;color:#3f4451;">42</div>
<svg style="position:absolute;left:1040px;top:864px;" width="14" height="13" viewBox="0 0 14 13" fill="none"><path d="M1 0.8 L13 12.2 M13 0.8 L1 12.2" stroke="#3f4451" stroke-width="1.5"/></svg>
<div class="t r" style="left:1074px;top:860.94px;font-size:17.5px;line-height:20px;font-weight:400;color:#3f4451;">1000<span style="color:#6cae87;font-size:14px;font-weight:700;-webkit-text-stroke:0;margin-left:3px">g</span></div>
<div class="t r" style="left:655.0px;width:1000px;text-align:center;top:860.94px;font-size:17.5px;line-height:20px;font-weight:400;color:#3f4451;">=</div>
<div class="t r" style="left:264px;width:1000px;text-align:right;top:860.94px;font-size:17.5px;line-height:20px;font-weight:400;color:#374151;"><span style="color:#3f4451">42</span><span style="color:#9ca3af">.000</span><span style="color:#6cae87;font-size:14px;font-weight:700;-webkit-text-stroke:0;margin-left:4px">kg</span></div>
<div class="t r" style="left:332px;width:1000px;text-align:right;top:860.94px;font-size:17.5px;line-height:20px;font-weight:400;color:#3f4451;">4</div>
<div class="t r" style="left:445px;width:1000px;text-align:right;top:860.94px;font-size:17.5px;line-height:20px;font-weight:400;color:#374151;"><span style="color:#3f4451">42</span><span style="color:#9ca3af">.000</span><span style="color:#6cae87;font-size:14px;font-weight:700;-webkit-text-stroke:0;margin-left:4px">kg</span></div>
<div style="position:absolute;left:1465px;top:853px;width:77px;height:35px;box-sizing:border-box;border:1px dotted #c4c8d0;border-radius:5px;background:#fff;"></div>
<div class="t r" style="left:534.5px;width:1000px;text-align:right;top:860.94px;font-size:17.5px;line-height:20px;font-weight:400;color:#3f4451;">42</div>
<div style="position:absolute;left:1556px;top:853px;width:76px;height:35px;box-sizing:border-box;border:1px dotted #c4c8d0;border-radius:5px;background:#fff;"></div>
<div class="t r" style="left:625px;width:1000px;text-align:right;top:860.94px;font-size:17.5px;line-height:20px;font-weight:400;color:#3f4451;">4<span style="color:#9ca3af">.0</span></div>
<div class="t r" style="left:717px;width:1000px;text-align:right;top:860.94px;font-size:17.5px;line-height:20px;font-weight:400;color:#374151;"><span style="color:#3f4451">0</span><span style="color:#9ca3af">.000</span><span style="color:#6cae87;font-size:14px;font-weight:700;-webkit-text-stroke:0;margin-left:4px">kg</span></div>
<div class="t r" style="left:830px;width:1000px;text-align:right;top:860.94px;font-size:17.5px;line-height:20px;font-weight:400;color:#374151;"><span style="color:#3f4451">960</span><span style="color:#9ca3af">.000</span><span style="color:#6cae87;font-size:14px;font-weight:700;-webkit-text-stroke:0;margin-left:4px">kg</span></div>
<div style="position:absolute;left:52px;top:952px;width:1796px;height:1px;background:#e5e7eb;"></div>
<div class="t r" style="left:532.5px;top:907.61px;font-size:17px;line-height:20px;font-weight:400;color:#374151;"><span style="color:#3a9a6c;font-size:13.6px">#1901</span> <span style="color:#c2622b">Sucre</span></div>
<div class="t r" style="left:532.5px;top:926.82px;font-size:16.4px;line-height:19px;font-weight:400;color:#3f4451;">FICHE 259 SUCRE FIN 1KG</div>
<div class="t r" style="left:-145px;width:1000px;text-align:right;top:915.87px;font-size:17.7px;line-height:20px;font-weight:400;color:#3f4451;">352772</div>
<div class="t r" style="left:-57px;width:1000px;text-align:right;top:915.94px;font-size:17.5px;line-height:20px;font-weight:400;color:#3f4451;">109A</div>
<div class="t r" style="left:13px;width:1000px;text-align:right;top:915.94px;font-size:17.5px;line-height:20px;font-weight:400;color:#3f4451;">339</div>
<svg style="position:absolute;left:1040px;top:919px;" width="14" height="13" viewBox="0 0 14 13" fill="none"><path d="M1 0.8 L13 12.2 M13 0.8 L1 12.2" stroke="#3f4451" stroke-width="1.5"/></svg>
<div class="t r" style="left:1074px;top:915.94px;font-size:17.5px;line-height:20px;font-weight:400;color:#3f4451;">1000<span style="color:#6cae87;font-size:14px;font-weight:700;-webkit-text-stroke:0;margin-left:3px">g</span></div>
<div class="t r" style="left:655.0px;width:1000px;text-align:center;top:915.94px;font-size:17.5px;line-height:20px;font-weight:400;color:#3f4451;">=</div>
<div class="t r" style="left:264px;width:1000px;text-align:right;top:915.94px;font-size:17.5px;line-height:20px;font-weight:400;color:#374151;"><span style="color:#3f4451">339</span><span style="color:#9ca3af">.000</span><span style="color:#6cae87;font-size:14px;font-weight:700;-webkit-text-stroke:0;margin-left:4px">kg</span></div>
<div class="t r" style="left:332px;width:1000px;text-align:right;top:915.94px;font-size:17.5px;line-height:20px;font-weight:400;color:#3f4451;">34</div>
<div class="t r" style="left:445px;width:1000px;text-align:right;top:915.94px;font-size:17.5px;line-height:20px;font-weight:400;color:#374151;"><span style="color:#3f4451">339</span><span style="color:#9ca3af">.000</span><span style="color:#6cae87;font-size:14px;font-weight:700;-webkit-text-stroke:0;margin-left:4px">kg</span></div>
<div style="position:absolute;left:1465px;top:908px;width:77px;height:35px;box-sizing:border-box;border:1px dotted #c4c8d0;border-radius:5px;background:#fff;"></div>
<div class="t r" style="left:534.5px;width:1000px;text-align:right;top:915.94px;font-size:17.5px;line-height:20px;font-weight:400;color:#3f4451;">339</div>
<div style="position:absolute;left:1556px;top:908px;width:76px;height:35px;box-sizing:border-box;border:1px dotted #c4c8d0;border-radius:5px;background:#fff;"></div>
<div class="t r" style="left:625px;width:1000px;text-align:right;top:915.94px;font-size:17.5px;line-height:20px;font-weight:400;color:#3f4451;">33<span style="color:#9ca3af">.0</span></div>
<div class="t r" style="left:717px;width:1000px;text-align:right;top:915.94px;font-size:17.5px;line-height:20px;font-weight:400;color:#374151;"><span style="color:#3f4451">0</span><span style="color:#9ca3af">.000</span><span style="color:#6cae87;font-size:14px;font-weight:700;-webkit-text-stroke:0;margin-left:4px">kg</span></div>
<div class="t r" style="left:830px;width:1000px;text-align:right;top:915.94px;font-size:17.5px;line-height:20px;font-weight:400;color:#374151;"><span style="color:#3f4451">960</span><span style="color:#9ca3af">.000</span><span style="color:#6cae87;font-size:14px;font-weight:700;-webkit-text-stroke:0;margin-left:4px">kg</span></div>
<div style="position:absolute;left:52px;top:1007px;width:1796px;height:1px;background:#e5e7eb;"></div>
<div class="t r" style="left:532.5px;top:962.61px;font-size:17px;line-height:20px;font-weight:400;color:#374151;"><span style="color:#3a9a6c;font-size:13.6px">#1901</span> <span style="color:#c2622b">Sucre</span></div>
<div class="t r" style="left:532.5px;top:981.82px;font-size:16.4px;line-height:19px;font-weight:400;color:#3f4451;">FICHE 259 SUCRE FIN 1KG</div>
<div class="t r" style="left:-145px;width:1000px;text-align:right;top:970.87px;font-size:17.7px;line-height:20px;font-weight:400;color:#3f4451;">352774</div>
<div class="t r" style="left:-57px;width:1000px;text-align:right;top:970.94px;font-size:17.5px;line-height:20px;font-weight:400;color:#3f4451;">115B</div>
<div class="t r" style="left:13px;width:1000px;text-align:right;top:970.94px;font-size:17.5px;line-height:20px;font-weight:400;color:#3f4451;">31</div>
<svg style="position:absolute;left:1040px;top:974px;" width="14" height="13" viewBox="0 0 14 13" fill="none"><path d="M1 0.8 L13 12.2 M13 0.8 L1 12.2" stroke="#3f4451" stroke-width="1.5"/></svg>
<div class="t r" style="left:1074px;top:970.94px;font-size:17.5px;line-height:20px;font-weight:400;color:#3f4451;">1000<span style="color:#6cae87;font-size:14px;font-weight:700;-webkit-text-stroke:0;margin-left:3px">g</span></div>
<div class="t r" style="left:655.0px;width:1000px;text-align:center;top:970.94px;font-size:17.5px;line-height:20px;font-weight:400;color:#3f4451;">=</div>
<div class="t r" style="left:264px;width:1000px;text-align:right;top:970.94px;font-size:17.5px;line-height:20px;font-weight:400;color:#374151;"><span style="color:#3f4451">31</span><span style="color:#9ca3af">.000</span><span style="color:#6cae87;font-size:14px;font-weight:700;-webkit-text-stroke:0;margin-left:4px">kg</span></div>
<div class="t r" style="left:332px;width:1000px;text-align:right;top:970.94px;font-size:17.5px;line-height:20px;font-weight:400;color:#3f4451;">3</div>
<div class="t r" style="left:445px;width:1000px;text-align:right;top:970.94px;font-size:17.5px;line-height:20px;font-weight:400;color:#374151;"><span style="color:#3f4451">31</span><span style="color:#9ca3af">.000</span><span style="color:#6cae87;font-size:14px;font-weight:700;-webkit-text-stroke:0;margin-left:4px">kg</span></div>
<div style="position:absolute;left:1465px;top:963px;width:77px;height:35px;box-sizing:border-box;border:1px dotted #c4c8d0;border-radius:5px;background:#fff;"></div>
<div class="t r" style="left:534.5px;width:1000px;text-align:right;top:970.94px;font-size:17.5px;line-height:20px;font-weight:400;color:#3f4451;">31</div>
<div style="position:absolute;left:1556px;top:963px;width:76px;height:35px;box-sizing:border-box;border:1px dotted #c4c8d0;border-radius:5px;background:#fff;"></div>
<div class="t r" style="left:625px;width:1000px;text-align:right;top:970.94px;font-size:17.5px;line-height:20px;font-weight:400;color:#3f4451;">3<span style="color:#9ca3af">.0</span></div>
<div class="t r" style="left:717px;width:1000px;text-align:right;top:970.94px;font-size:17.5px;line-height:20px;font-weight:400;color:#374151;"><span style="color:#3f4451">0</span><span style="color:#9ca3af">.000</span><span style="color:#6cae87;font-size:14px;font-weight:700;-webkit-text-stroke:0;margin-left:4px">kg</span></div>
<div class="t r" style="left:830px;width:1000px;text-align:right;top:970.94px;font-size:17.5px;line-height:20px;font-weight:400;color:#374151;"><span style="color:#3f4451">960</span><span style="color:#9ca3af">.000</span><span style="color:#6cae87;font-size:14px;font-weight:700;-webkit-text-stroke:0;margin-left:4px">kg</span></div>
<div style="position:absolute;left:52px;top:0;width:471px;height:1006px;overflow:hidden">
<div class="t" style="left:-912px;width:1000px;text-align:right;top:433.39px;font-size:16.2px;line-height:19px;font-weight:700;color:#4338ca;">Organisation</div>
<div class="t r" style="left:-4.5px;top:587.11px;font-size:17px;line-height:20px;font-weight:400;color:#be1a6e;">ASECLES</div>
<div class="t r" style="left:-4px;top:642.11px;font-size:17px;line-height:20px;font-weight:400;color:#be1a6e;">UEST</div>
<div class="t r" style="left:0.5px;top:752.11px;font-size:17px;line-height:20px;font-weight:400;color:#be1a6e;">ELLES</div>
<div class="t r" style="left:-10px;top:807.11px;font-size:17px;line-height:20px;font-weight:400;color:#be1a6e;">N</div>
<div class="t r" style="left:10.5px;top:807.11px;font-size:17px;line-height:20px;font-weight:400;color:#be1a6e;">BOSCO</div>
</div>
<div style="position:absolute;left:0px;top:0px;width:1902px;height:67px;background:#ffffff;box-shadow:0 1px 2px rgba(0,0,0,0.02);"></div>
<svg style="position:absolute;left:36px;top:25px;" width="23" height="18" viewBox="0 0 23 18" fill="none"><g stroke="#2d3340" stroke-width="2" stroke-linecap="round"><path d="M1.5 2.7 H21.5"/><path d="M1.5 8.8 H21.5"/><path d="M1.5 15 H21.5"/></g></svg>
<svg style="position:absolute;left:69px;top:12px;" width="42" height="44" viewBox="0 0 42 44" fill="none"><g fill="none" stroke="#2aa838">
<path d="M3.3 14.7 A19 19 0 0 1 38.6 15.7" stroke-width="2.4" stroke-dasharray="1.3 0.7" opacity="0.8"/>
<path d="M7.6 33.3 A18.5 18.5 0 0 0 36.7 32.4" stroke-width="2.4" stroke-dasharray="1.3 0.7" opacity="0.8"/>
<circle cx="21.7" cy="22" r="14.2" stroke-width="1.15"/>
<path d="M10 27.9 H33.4" stroke-width="1" stroke="#5aa56a"/>
</g>
<g fill="#1fa233">
<path d="M10.3 17.2 L12.6 20.3 Q15.5 19.6 18 20.6 L20.8 21.2 Q19.8 24.6 16.6 25.6 Q12.8 26.1 11.4 22.4 Z"/>
<path d="M33.1 17.2 L30.8 20.3 Q27.9 19.6 25.4 20.6 L22.6 21.2 Q23.6 24.6 26.8 25.6 Q30.6 26.1 32 22.4 Z"/>
<path d="M18.6 25.3 H24.8 Q24.5 27.7 21.7 27.7 Q18.9 27.7 18.6 25.3 Z"/>
</g></svg>
<div class="t r" style="left:130px;top:-9.87px;font-size:25.6px;line-height:29px;font-weight:400;color:#2d3748;">Fédération des</div>
<div class="t r" style="left:130px;top:20.63px;font-size:25.6px;line-height:29px;font-weight:400;color:#2d3748;">Banques</div>
<div class="t r" style="left:130px;top:51.13px;font-size:25.6px;line-height:29px;font-weight:400;color:#2d3748;">Alimentaires</div>
<svg style="position:absolute;left:1397px;top:22px;" width="24" height="24" viewBox="0 0 24 24" fill="none"><circle cx="12" cy="12" r="5.2" stroke="#2f3542" stroke-width="1.8"/><g stroke="#2f3542" stroke-width="1.8" stroke-linecap="round"><path d="M12 1.8 V2.4"/><path d="M12 21.6 V22.2"/><path d="M1.8 12 H2.4"/><path d="M21.6 12 H22.2"/><path d="M4.8 4.8 L5.3 5.3"/><path d="M18.7 18.7 L19.2 19.2"/><path d="M4.8 19.2 L5.3 18.7"/><path d="M18.7 5.3 L19.2 4.8"/></g></svg>
<div class="t r" style="left:1471px;top:24.33px;font-size:17.8px;line-height:20px;font-weight:400;color:#645ee6;">Vandermeersch Roland</div>
<svg style="position:absolute;left:1673px;top:24px;" width="19" height="19" viewBox="0 0 19 19" fill="none"><g stroke="#645ee6" stroke-width="1.6" fill="none" stroke-linecap="round"><circle cx="9.5" cy="5.5" r="3.8"/><path d="M1.5 17.5 Q1.5 11.5 9.5 11.5 Q17.5 11.5 17.5 17.5"/></g></svg>
<div style="position:absolute;left:1755px;top:24px;width:9px;height:21px;background:#000091;"></div>
<div style="position:absolute;left:1774px;top:24px;width:9px;height:21px;background:#e1000f;"></div>
<svg style="position:absolute;left:1824px;top:13px;" width="43" height="43" viewBox="0 0 43 43" fill="none"><circle cx="21.5" cy="21.5" r="21.5" fill="#645ee6"/><path d="M13 22.5 Q11 19.5 13.2 16.2 Q16.5 10.8 22.5 10.6 Q31 11 31.2 21 Q31 28.5 24.5 30.8 Q22 31.3 21.6 28 Q21 23.8 17.5 23.3 Q14.5 23.3 13 22.5 Z" stroke="#fff" stroke-width="2" fill="none" stroke-linejoin="round"/><g fill="#fff"><circle cx="17.5" cy="16.8" r="1.25"/><circle cx="21.9" cy="15" r="1.25"/><circle cx="25.9" cy="16.8" r="1.25"/><circle cx="27.6" cy="20.9" r="1.25"/><circle cx="25.9" cy="25" r="1.25"/></g></svg>
<div style="position:absolute;left:1902px;top:0px;width:16px;height:1006px;background:#f9f9f9;box-shadow:inset 1px 0 0 #ececec;"></div>
<div style="position:absolute;left:1906px;top:124px;width:9px;height:368px;background:#c1c1c1;border-radius:5px;"></div>
<div style="position:absolute;left:1918px;top:0px;width:2px;height:1006px;background:#000;"></div>
</body></html>
